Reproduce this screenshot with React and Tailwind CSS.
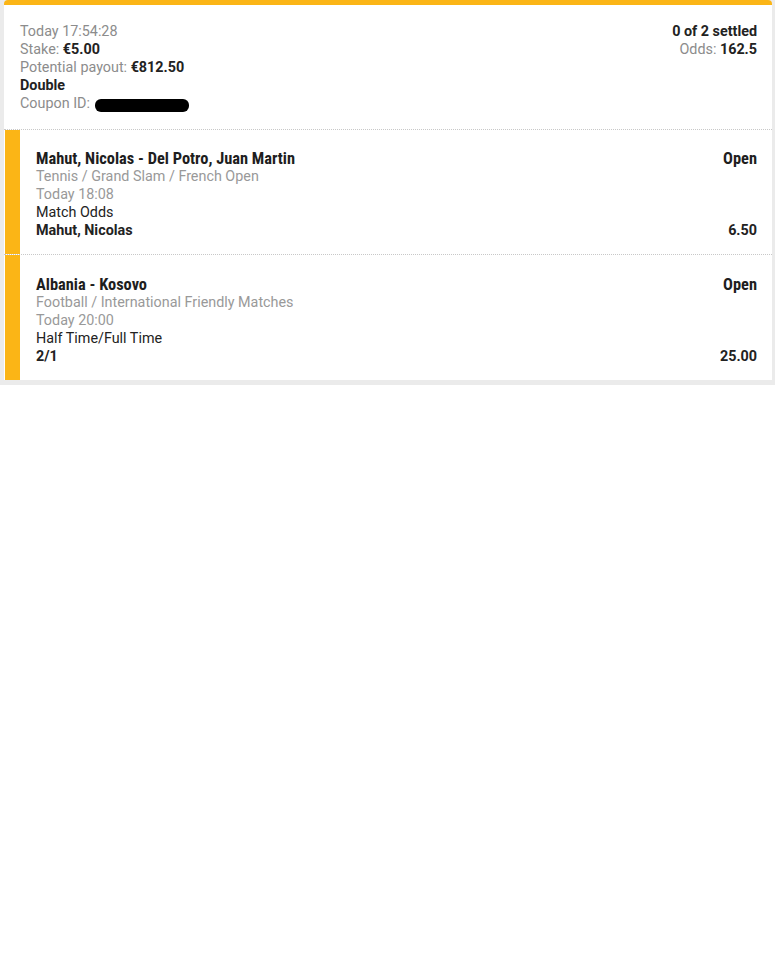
export default function App() {
  const body = { fontFamily: "Roboto, 'Liberation Sans', sans-serif" };
  const cond = { fontFamily: "'Roboto Condensed', 'Liberation Sans Narrow', 'Liberation Sans', sans-serif" };
  const selections = [
    {
      title: "Mahut, Nicolas - Del Potro, Juan Martin",
      path: "Tennis / Grand Slam / French Open",
      time: "Today 18:08",
      market: "Match Odds",
      pick: "Mahut, Nicolas",
      odds: "6.50",
      pt: "pt-[19px]",
      pb: "pb-[14px]",
    },
    {
      title: "Albania - Kosovo",
      path: "Football / International Friendly Matches",
      time: "Today 20:00",
      market: "Half Time/Full Time",
      pick: "2/1",
      odds: "25.00",
      pt: "pt-[20px]",
      pb: "pb-[14px]",
    },
  ];
  return (
    <div className="w-[775px] bg-white" style={body}>
      <div className="bg-[#ebebeb] pl-[4px] pr-[3px] pb-[5px]">
        <div className="bg-white rounded-t-[4px] border-t-[5px] border-[#fbb516] text-[14.35px] leading-[18px]">
          <div className="flex justify-between pl-[16px] pr-[15px] pt-[18px] pb-[16px]">
            <div>
              <div className="text-[#8c8c8c]">Today 17:54:28</div>
              <div className="text-[#8c8c8c]">
                Stake: <span className="font-bold text-[#222]">€5.00</span>
              </div>
              <div className="text-[#8c8c8c]">
                Potential payout: <span className="font-bold text-[#222]">€812.50</span>
              </div>
              <div className="font-bold text-[#222]">Double</div>
              <div className="flex items-center text-[#8c8c8c]">
                Coupon ID:
                <span className="ml-[5px] inline-block w-[94px] h-[13px] bg-black rounded-[6px] mt-[2px]" />
              </div>
            </div>
            <div className="text-right">
              <div className="font-bold text-[#222]">0 of 2 settled</div>
              <div className="text-[#8c8c8c]">
                Odds: <span className="font-bold text-[#222]">162.5</span>
              </div>
            </div>
          </div>
          {selections.map((s) => (
            <div key={s.title} className="flex border-t border-dotted border-[#c8c8c8]">
              <div className="w-[15px] ml-[1px] bg-[#fbb516]" />
              <div className={`flex-1 flex justify-between pl-[16px] pr-[15px] ${s.pt} ${s.pb}`}>
                <div>
                  <div className="font-bold text-[16.4px] leading-[19px] text-[#1e1e1e]" style={cond}>{s.title}</div>
                  <div className="text-[#999]">{s.path}</div>
                  <div className="text-[#999]">{s.time}</div>
                  <div className="text-[#222]">{s.market}</div>
                  <div className="font-bold text-[#222]">{s.pick}</div>
                </div>
                <div className="flex flex-col justify-between items-end">
                  <div className="font-bold text-[16.4px] leading-[19px] text-[#1e1e1e]" style={cond}>Open</div>
                  <div className="font-bold text-[#222]">{s.odds}</div>
                </div>
              </div>
            </div>
          ))}
        </div>
      </div>
      <div className="h-[576px]" />
    </div>
  );
}
